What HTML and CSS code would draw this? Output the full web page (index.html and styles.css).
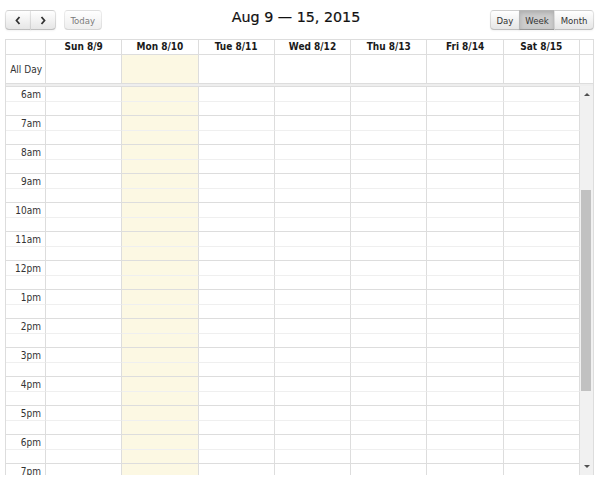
FILE: index.html
```html
<!DOCTYPE html>
<html>
<head>
<meta charset="utf-8">
<link rel="stylesheet" href="styles.css">
</head>
<body>
<div class="cal">
  <div class="toolbar">
    <div class="tb-left">
      <div class="btn-group">
        <button class="btn first"><svg width="8" height="9" viewBox="0 0 8 9"><polyline points="5.5,1 2.5,4.5 5.5,8" fill="none" stroke="#333" stroke-width="1.8"/></svg></button>
        <button class="btn last"><svg width="8" height="9" viewBox="0 0 8 9"><polyline points="2.5,1 5.5,4.5 2.5,8" fill="none" stroke="#333" stroke-width="1.8"/></svg></button>
      </div>
      <button class="btn single disabled">Today</button>
    </div>
    <h2 class="title">Aug 9 — 15, 2015</h2>
    <div class="tb-right">
      <div class="btn-group">
        <button class="btn first">Day</button>
        <button class="btn active">Week</button>
        <button class="btn last">Month</button>
      </div>
    </div>
  </div>

  <div class="view">
    <div class="grid head">
      <div class="axis"></div>
      <div class="dh">Sun 8/9</div>
      <div class="dh">Mon 8/10</div>
      <div class="dh">Tue 8/11</div>
      <div class="dh">Wed 8/12</div>
      <div class="dh">Thu 8/13</div>
      <div class="dh">Fri 8/14</div>
      <div class="dh">Sat 8/15</div>
      <div class="gut"></div>
    </div>
    <div class="grid allday">
      <div class="axis lbl">All Day</div>
      <div class="dc"></div>
      <div class="dc today"></div>
      <div class="dc"></div>
      <div class="dc"></div>
      <div class="dc"></div>
      <div class="dc"></div>
      <div class="dc"></div>
      <div class="gut"></div>
    </div>
    <div class="divider"></div>
    <div class="body">
      <div class="slats" id="slats"></div>
      <div class="sbar">
        <div class="sb-btn"><span class="tri up"></span></div>
        <div class="sb-track"><div class="sb-thumb"></div></div>
        <div class="sb-btn"><span class="tri down"></span></div>
      </div>
    </div>
  </div>
</div>
<script src="app.js"></script>
</body>
</html>
```

FILE: app.js
```js
(function () {
  var slats = document.getElementById('slats');
  var html = '';
  for (var h = 6; h <= 19; h++) {
    var lab = (h === 12) ? '12pm' : (h > 12 ? (h - 12) + 'pm' : h + 'am');
    for (var m = 0; m < 2; m++) {
      html += '<div class="grid slat ' + (m ? 'minor' : 'major') + '">';
      html += '<div class="axis tl">' + (m ? '' : lab) + '</div>';
      for (var d = 0; d < 7; d++) {
        html += '<div class="sc' + (d === 1 ? ' today' : '') + '"></div>';
      }
      html += '</div>';
    }
  }
  slats.innerHTML = html;
})();
```

FILE: styles.css
```css
* { box-sizing: border-box; }
html, body { margin: 0; padding: 0; background: #fff; }
body {
  font-family: "DejaVu Sans Condensed", "DejaVu Sans", sans-serif;
  font-stretch: condensed;
  font-size: 10px;
  color: #222;
}
.cal { padding: 10px 6px 0 5px; width: 600px; }

.toolbar {
  display: grid;
  grid-template-columns: 1fr auto 1fr;
  align-items: center;
  height: 20px;
  margin-bottom: 9px;
}
.tb-left { display: flex; gap: 8px; }
.tb-right { display: flex; justify-content: flex-end; }
.title {
  margin: 0;
  align-self: start;
  line-height: 14px;
  font-family: "DejaVu Sans", sans-serif;
  font-stretch: normal;
  font-size: 14.3px;
  font-weight: normal;
  color: #111;
  padding-right: 7px;
  -webkit-text-stroke: 0.2px #111;
}
.btn-group { display: flex; }
.btn {
  height: 20px;
  margin: 0;
  padding: 0 5.5px;
  font-family: inherit;
  font-stretch: condensed;
  font-size: 9.5px;
  color: #333;
  background: linear-gradient(#fff, #e6e6e6);
  border: 1px solid;
  border-color: rgba(0,0,0,.1) rgba(0,0,0,.1) rgba(0,0,0,.25);
  box-shadow: inset 0 1px 0 rgba(255,255,255,.2), 0 1px 2px rgba(0,0,0,.05);
  border-radius: 0;
  display: flex;
  align-items: center;
  justify-content: center;
}
.btn-group .btn + .btn { margin-left: -1px; }
.btn.first { border-radius: 4px 0 0 4px; }
.btn.last { border-radius: 0 4px 4px 0; }
.btn.single { border-radius: 4px; }
.tb-left .btn-group .btn { width: 26px; padding: 0; }
.btn.disabled { opacity: .65; box-shadow: none; }
.btn.active {
  background: #ccc;
  box-shadow: inset 0 2px 4px rgba(0,0,0,.15), 0 1px 2px rgba(0,0,0,.05);
}

.view { border: 1px solid #ddd; border-bottom: 0; }
.grid {
  display: grid;
  grid-template-columns: 40px repeat(7, 1fr) 13px;
}
.head { height: 15px; border-bottom: 1px solid #ddd; }
.head .axis, .head .dh { border-right: 1px solid #ddd; }
.dh {
  font-weight: bold;
  text-align: center;
  line-height: 14px;
  color: #1a1a1a;
}
.allday { height: 29px; border-bottom: 1px solid #ddd; }
.allday .axis, .allday .dc { border-right: 1px solid #ddd; }
.lbl {
  display: flex;
  align-items: center;
  justify-content: flex-end;
  padding-right: 3px;
  color: #333;
}
.today { background: #fcf8e3; }
.divider { height: 2px; background: #eee; }

.body { display: flex; height: 389px; overflow: hidden; }
.slats { width: 574px; height: 389px; overflow: hidden; }
.slat {
  grid-template-columns: 40px repeat(7, 1fr);
  height: 14.5px;
}
.slat > div { border-right: 1px solid #ddd; border-top: 1px solid #ddd; }
.slat.minor > div { border-top: 1px solid #efefef; }
.tl {
  text-align: right;
  padding-right: 4px;
  line-height: 16px;
  color: #333;
  white-space: nowrap;
}

.sbar {
  width: 13px;
  background: #f1f1f1;
  display: flex;
  flex-direction: column;
}
.sb-btn {
  height: 17px;
  display: flex;
  align-items: center;
  justify-content: center;
}
.sb-track { flex: 1; }
.sb-thumb {
  margin: 87px 2px 0 1px;
  height: 201px;
  background: #c1c1c1;
}
.tri { width: 0; height: 0; border-left: 3px solid transparent; border-right: 3px solid transparent; }
.tri.up { border-bottom: 3px solid #505050; }
.tri.down { border-top: 3px solid #505050; }
```
